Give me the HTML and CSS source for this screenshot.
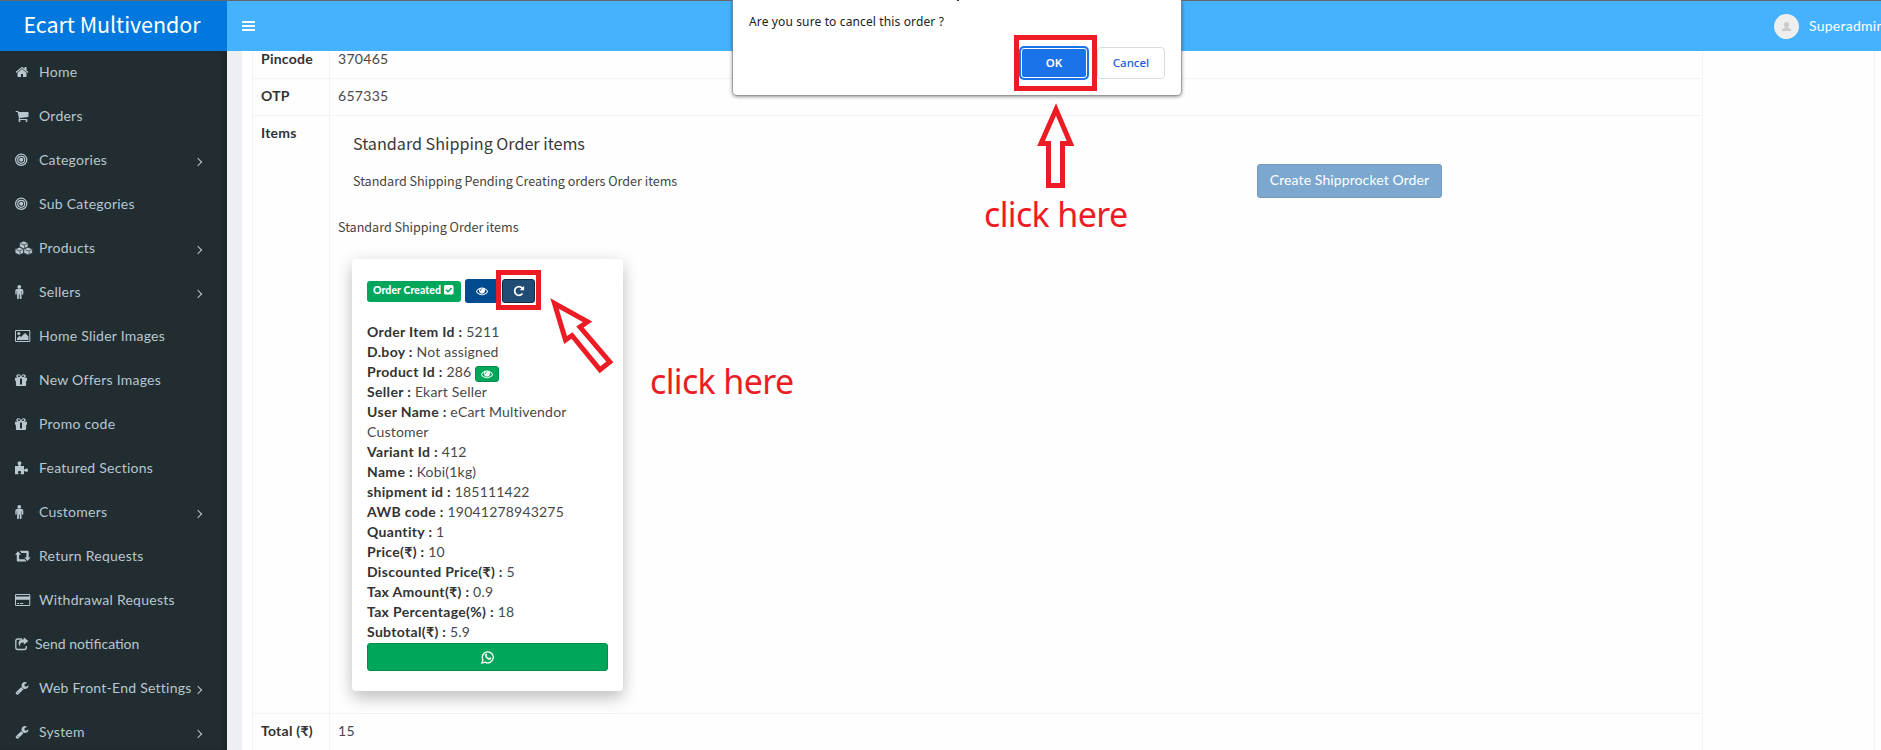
FILE: index.html
```html
<!DOCTYPE html>
<html lang="en">
<head>
<meta charset="utf-8">
<title>Ecart Multivendor</title>
<link rel="stylesheet" href="styles.css">
</head>
<body>
<svg width="0" height="0" class="defs">
  <symbol id="home" viewBox="0 0 1792 1792"><path d="M1472 992v480q0 26-19 45t-45 19h-384v-384h-256v384h-384q-26 0-45-19t-19-45v-480q0-1 .5-3t.5-3l575-474 575 474q1 2 1 6zm223-69l-62 74q-8 9-21 11h-3q-13 0-21-7l-692-577-692 577q-12 8-24 7-13-2-21-11l-62-74q-8-10-7-23.5t11-21.5l719-599q32-26 76-26t76 26l244 204v-195q0-14 9-23t23-9h192q14 0 23 9t9 23v408l219 182q10 8 11 21.5t-7 23.5z"/></symbol>
  <symbol id="cart" viewBox="0 0 1792 1792"><path d="M704 1536q0 52-38 90t-90 38-90-38-38-90 38-90 90-38 90 38 38 90zm896 0q0 52-38 90t-90 38-90-38-38-90 38-90 90-38 90 38 38 90zm128-1088v512q0 24-16.5 42.5t-40.5 21.5l-1044 122q13 60 13 70 0 16-24 64h920q26 0 45 19t19 45-19 45-45 19h-1024q-26 0-45-19t-19-45q0-11 8-31.5t16-36 21.5-40 15.5-29.5l-177-823h-204q-26 0-45-19t-19-45 19-45 45-19h256q16 0 28.5 6.5t19.5 15.5 13 24.5 8 26 5.5 29.5 4.5 26h1201q26 0 45 19t19 45z"/></symbol>
  <symbol id="bull" viewBox="0 0 14 14"><g fill="none" stroke="currentColor"><circle cx="6.200" cy="6.800" r="5.600" stroke-width="1.200"/><circle cx="6.200" cy="6.800" r="3.500" stroke-width="1.200"/></g><circle cx="6.200" cy="6.800" r="2"/></symbol>
  <symbol id="cubes" viewBox="0 0 18 14"><g stroke="#222d32" stroke-width=".7" stroke-linejoin="round"><path d="M8.800 0l4.200 1.900v4L8.800 7.900 4.600 5.900v-4z"/><path d="M4.400 6.200l4.300 1.900v4L4.400 14 .1 12.100v-4z"/><path d="M13.100 6.200l4.300 1.900v4L13.100 14l-4.300-1.900v-4z"/><path d="M5.800 2.700L9 4l3.200-1.300M9 4M9.600 4.500v2.600M1.300 8.700l3.200 1.300 3.200-1.300M5.100 10.500v2.600M10.300 8.700l3.200 1.300 3.200-1.300M14.100 10.500v2.600" fill="none"/></g></symbol>
  <symbol id="male" viewBox="0 0 9 14"><circle cx="4.300" cy="1.900" r="1.900"/><path d="M2 4h4.600Q8.300 4 8.300 5.700V9q0 .8-.7.800T6.900 9V6.300h-.4v7q0 .8-.9.800t-.9-.8v-3.800h-.8v3.800q0 .8-.9.800t-.9-.8v-7h-.4V9q0 .8-.7.800T.3 9V5.700Q.3 4 2 4z"/></symbol>
  <symbol id="image" viewBox="0 0 16 14"><path fill-rule="evenodd" d="M1.200 1h12.900q1.200 0 1.200 1.200v9.600q0 1.200-1.200 1.200H1.200Q0 13 0 11.800V2.200Q0 1 1.200 1zM1 2v10h13.300V2z"/><circle cx="3.800" cy="4.600" r="1.500"/><path d="M2 11V9.300l2.500-2.500L6 8.100l4-4 3.400 3.200V11z"/></symbol>
  <symbol id="gift" viewBox="0 0 13 14"><path fill-rule="evenodd" d="M0 4.700h3.400C1.200 4.600 1 3 1.500 2.200 2.600.8 4.500.9 5.400 2.300L6 3.300l.6-1C7.500.9 9.400.8 10.500 2.200c.5.800.3 2.400-1.900 2.500H12v3h-.9V12q0 .9-.9.900H1.800q-.9 0-.9-.9V7.700H0zM3.400 3.900h1.900L4.500 2.700C3.700 1.700 2 3.200 3.400 3.900zm5.200 0C10 3.200 8.300 1.700 7.500 2.700l-.8 1.200zM5 5.500v6h2v-6z"/></symbol>
  <symbol id="puzzle" viewBox="0 0 14 14"><path d="M0 5h3.700C3 3.800 2.600 3 2.600 2.100 2.600.9 3.500.5 4.500.5S6.400.9 6.400 2.100C6.400 3 6 3.800 5.300 5H9v3.200c.7.700 1.300-.6 2.500-.6 1 0 1.500.7 1.500 1.600s-.5 1.600-1.500 1.600c-1.200 0-1.800-1.300-2.500-.6V13.300H5.700c-.6-.6.4-1.100.4-2.200 0-.8-.6-1.200-1.500-1.200s-1.600.4-1.600 1.200c0 1.100 1 1.600.4 2.200H0z"/></symbol>
  <symbol id="retweet" viewBox="0 0 16 14"><path d="M3 2.300l3 3.500H4.100v4.500h5.700l1.700 2.200H2.600q-.8 0-.8-.8V5.800H0zM4.800 1.700h7.900q1 0 1 1v5.700H15.600l-3.100 3.700-3.100-3.700h2V4H6.500z"/></symbol>
  <symbol id="card" viewBox="0 0 16 14"><path fill-rule="evenodd" d="M1.300 1h12.700q1.300 0 1.300 1.300v9.400q0 1.300-1.300 1.300H1.300Q0 13 0 11.700V2.300Q0 1 1.300 1zM1 2v1.500h13.300V2zM1 6.800V12h13.300V6.800z"/><path d="M2 10h2v1H2zM5 10h3.200v1H5z"/></symbol>
  <symbol id="share" viewBox="0 0 14 14"><path d="M7 2H3Q.8 2 .8 4v6.500q0 2 2 2h6.500q2 0 2-2V9" fill="none" stroke="currentColor" stroke-width="1.300"/><path d="M8.800.2l4.500 3.700-4.500 3.800V5.600C5.500 5.500 4.600 7 5.300 9.800 2.200 6.500 3.200 2.400 8.800 2.300z"/></symbol>
  <symbol id="wrench" viewBox="0 0 1792 1792"><path d="M448 1472q0-26-19-45t-45-19-45 19-19 45 19 45 45 19 45-19 19-45zm644-420l-682 682q-37 37-90 37-52 0-91-37l-106-108q-38-36-38-90 0-53 38-91l681-681q39 98 114.500 173.500t173.500 114.500zm634-435q0 39-23 106-47 134-164.500 217.500t-258.500 83.500q-185 0-316.500-131.500t-131.500-316.500 131.500-316.500 316.500-131.500q58 0 121.500 16.500t107.500 46.500q16 11 16 28t-16 28l-293 169v224l193 107q5-3 79-48.500t135.500-81 70.500-35.500q15 0 23.500 10t8.500 25z"/></symbol>
  <symbol id="eye" viewBox="0 0 1792 1792"><path d="M1664 960q-152-236-381-353 61 104 61 225 0 185-131.500 316.500t-316.500 131.500-316.500-131.500-131.500-316.500q0-121 61-225-229 117-381 353 133 205 333.500 326.500t434.500 121.500 434.500-121.500 333.500-326.500zm-720-384q0-20-14-34t-34-14q-125 0-214.500 89.500t-89.500 214.500q0 20 14 34t34 14 34-14 14-34q0-86 61-147t147-61q20 0 34-14t14-34zm848 384q0 34-20 69-140 230-376.500 368.500t-499.500 138.500-499.500-139-376.500-368q-20-35-20-69t20-69q140-229 376.500-368t499.500-139 499.500 139 376.500 368q20 35 20 69z"/></symbol>
  <symbol id="repeat" viewBox="0 0 1792 1792"><path d="M1664 256v448q0 26-19 45t-45 19h-448q-42 0-59-40-17-39 14-69l138-138q-148-137-349-137-104 0-198.500 40.500t-163.500 109.500-109.500 163.500-40.500 198.500 40.500 198.500 109.500 163.500 163.500 109.500 198.500 40.500q119 0 225-52t179-147q7-10 23-12 15 0 25 9l137 138q9 8 9.500 20.500t-7.500 22.500q-109 132-264 204.500t-327 72.500q-156 0-298-61t-245-164-164-245-61-298 61-298 164-245 245-164 298-61q147 0 284.500 55.500t244.500 156.500l130-129q29-31 70-14 39 17 39 59z"/></symbol>
  <symbol id="check" viewBox="0 0 10 10"><rect width="9.500" height="9.500" rx="1.600"/><path d="M2 4.800l2 2 3.600-3.700" fill="none" stroke="#00a65a" stroke-width="1.500"/></symbol>
  <symbol id="whatsapp" viewBox="0 0 14 14"><path d="M1 13l.9-3.100A5.500 5.500 0 1 1 4 12.100z" fill="none" stroke="currentColor" stroke-width="1.300"/><path d="M4.600 3.700c.6-.4 1-.3 1.200.2l.4 1c.1.400-.5.800-.5 1.100.5.900 1.200 1.500 2.200 2 .4 0 .7-.9 1.100-.8l1.100.6c.6.300.2 1.200-.3 1.600-1 .7-2.500.1-3.600-.7C5 7.900 4.100 6.700 3.900 5.600c0-.8.2-1.500.7-1.900z"/></symbol>
</svg>

<div class="page">
  <header class="top">
    <div class="logo"><span class="t-logo">Ecart Multivendor</span></div>
    <nav class="navbar">
      <div class="burger"><i></i><i></i><i></i></div>
      <div class="user">
        <svg class="avatar" viewBox="0 0 25 25"><circle cx="12.500" cy="12.500" r="12.500" fill="#eee"/><path d="M12.500 8c1.600 0 2.600 1 2.500 2.700-.1 1.400-1 1.700-1 2.600 0 1.200 3.200 1 3.200 3.600H7.800c0-2.600 3.200-2.400 3.200-3.600 0-.9-.9-1.200-1-2.600C9.900 9 10.900 8 12.500 8z" fill="#c9c9c9"/></svg>
        <span class="t-user">Superadmin</span>
      </div>
    </nav>
  </header>
  <div class="body">
    <ul class="side">
      <li><svg class="w14"><use href="#home"/></svg><span>Home</span></li>
      <li><svg class="w14"><use href="#cart"/></svg><span>Orders</span></li>
      <li><svg class="w14"><use href="#bull"/></svg><span>Categories</span><b class="caret"></b></li>
      <li><svg class="w14"><use href="#bull"/></svg><span>Sub Categories</span></li>
      <li><svg class="w18"><use href="#cubes"/></svg><span>Products</span><b class="caret"></b></li>
      <li><svg class="w9"><use href="#male"/></svg><span>Sellers</span><b class="caret"></b></li>
      <li><svg class="w16"><use href="#image"/></svg><span>Home Slider Images</span></li>
      <li><svg class="w13"><use href="#gift"/></svg><span>New Offers Images</span></li>
      <li><svg class="w13"><use href="#gift"/></svg><span>Promo code</span></li>
      <li><svg class="w14"><use href="#puzzle"/></svg><span>Featured Sections</span></li>
      <li><svg class="w9"><use href="#male"/></svg><span>Customers</span><b class="caret"></b></li>
      <li><svg class="w16"><use href="#retweet"/></svg><span>Return Requests</span></li>
      <li><svg class="w16"><use href="#card"/></svg><span>Withdrawal Requests</span></li>
      <li class="tight"><svg class="w14"><use href="#share"/></svg><span>Send notification</span></li>
      <li><svg class="w14"><use href="#wrench"/></svg><span>Web Front-End Settings</span><b class="caret"></b></li>
      <li><svg class="w14"><use href="#wrench"/></svg><span>System</span><b class="caret"></b></li>
    </ul>
    <main class="content">
      <div class="box">
        <div class="table">
          <div class="row pin"><div class="th">Pincode</div><div class="td">370465</div></div>
          <div class="row"><div class="th">OTP</div><div class="td">657335</div></div>
          <div class="row items"><div class="th">Items</div>
            <div class="td">
              <h4 class="t-h4">Standard Shipping Order items</h4>
              <div class="pending"><span class="t-src t-pend">Standard Shipping Pending Creating orders Order items</span><button class="create">Create Shipprocket Order</button></div>
              <div class="t-src t-std">Standard Shipping Order items</div>
              <div class="card">
                <div class="actions">
                  <span class="badge"><span>Order Created</span><svg><use href="#check"/></svg></span>
                  <span class="btn-eye"><svg><use href="#eye"/></svg></span>
                  <span class="btn-redo"><svg><use href="#repeat"/></svg></span>
                </div>
                <p><b>Order Item Id : </b>5211</p>
                <p><b>D.boy : </b>Not assigned</p>
                <p><b>Product Id : </b>286 <span class="mini"><svg><use href="#eye"/></svg></span></p>
                <p><b>Seller : </b>Ekart Seller</p>
                <p><b>User Name : </b>eCart Multivendor<br>Customer</p>
                <p><b>Variant Id : </b>412</p>
                <p><b>Name : </b>Kobi(1kg)</p>
                <p><b>shipment id : </b>185111422</p>
                <p><b>AWB code : </b>19041278943275</p>
                <p><b>Quantity : </b>1</p>
                <p><b>Price(₹) : </b>10</p>
                <p><b>Discounted Price(₹) : </b>5</p>
                <p><b>Tax Amount(₹) : </b>0.9</p>
                <p><b>Tax Percentage(%) : </b>18</p>
                <p><b>Subtotal(₹) : </b>5.9</p>
                <div class="wa"><svg><use href="#whatsapp"/></svg></div>
              </div>
            </div>
          </div>
          <div class="row"><div class="th">Total (₹)</div><div class="td">15</div></div>
        </div>
      </div>
    </main>
  </div>

  <div class="dialog">
    <i class="descender"></i>
    <p class="t-dlg">Are you sure to cancel this order ?</p>
    <div class="dlg-btns"><span class="ok">OK</span><span class="cancel">Cancel</span></div>
  </div>
  <div class="mark mark-ok"></div>
  <div class="mark mark-redo"></div>
  <svg class="arrows" viewBox="0 0 1881 750"><g fill="#fff" stroke="#ed1c24" stroke-width="5" stroke-miterlimit="10">
    <path d="M1056 109.500L1041 143.500H1048.500V185.500H1062.500V143.500H1070.500Z"/>
    <path d="M554.500 303.500L587.500 321.700 580 327 609.800 362 600 369.800 572 335.500 565.500 340Z"/>
  </g></svg>
  <div class="note note-ok">click here</div>
  <div class="note note-redo">click here</div>
</div>
</body>
</html>
```
FILE: styles.css
```css
* { box-sizing: border-box; }
body { margin: 0; font: 14px/20px Lato, "Noto Sans", sans-serif; color: #333; }
.defs { position: absolute; }
svg { fill: currentColor; display: block; }
p, h4, ul { margin: 0; padding: 0; font-weight: 400; }
.page { position: relative; width: 1881px; height: 750px; overflow: hidden; display: flex; flex-direction: column; }

.top { display: flex; height: 51px; flex: none; border-top: 1px solid #66686b; color: #fff; }
.logo { width: 227px; background: #0078de; display: flex; justify-content: center; padding: 9px 3px 0 0; }
.t-logo { font: 21.5px/28px "Noto Sans CJK SC", sans-serif; white-space: nowrap; letter-spacing: -.05px; }
.navbar { flex: 1; background: #44b2ff; display: flex; justify-content: space-between; padding-left: 15px; }
.burger { display: flex; flex-direction: column; gap: 2px; padding-top: 20px; }
.burger i { width: 13px; height: 2px; background: #fff; }
.user { display: flex; gap: 10px; width: 107px; padding-top: 13px; }
.avatar { width: 25px; height: 25px; flex: none; }
.t-user { line-height: 23px; letter-spacing: .25px; }

.body { display: flex; flex: 1; min-height: 0; }
.side { width: 227px; background: #222d32; box-shadow: inset -4px 0 4px -1px #1a2428; color: #b8c7ce; list-style: none; padding-left: 15px; }
.side li { display: grid; grid-template-columns: 24px 1fr 14px; align-items: center; height: 44px; padding-right: 15px; padding-bottom: 2px; letter-spacing: .25px; white-space: nowrap; }
.side li.tight { grid-template-columns: 20px 1fr; letter-spacing: 0; }
.side svg { height: 14px; width: 14px; }
.side .w18 { width: 18px; }
.side .w16 { width: 16px; }
.side .w13 { width: 13px; }
.side .w9 { width: 9px; }
.caret { width: 6px; height: 6px; border: solid #b8c7ce; border-width: 1.5px 1.5px 0 0; transform: rotate(45deg); margin: 3px 0 0 -3px; }

.content { flex: 1; background: #ecf0f5; padding-left: 15px; }
.box { background: #fefefe; width: 1633px; height: 100%; padding-left: 10px; border-right: 1px solid #f2f2f2; outline: 6px solid #fefefe; clip-path: inset(0 -6px 0 0); }
.table { width: 1451px; border: solid #f3f3f3; border-width: 0 1px; }
.row { display: grid; grid-template-columns: 77px 1fr; border-bottom: 1px solid #f3f3f3; height: 37px; }
.row.pin { height: 28px; }
.row.pin > div { padding-top: 0; line-height: 18px; margin-top: -1px; }
.row.items { height: 598px; }
.th { font-weight: 700; padding: 7px 8px; border-right: 1px solid #f3f3f3; letter-spacing: .25px; white-space: nowrap; }
.td { padding: 7px 8px; letter-spacing: .3px; color: #484848; }

.t-h4 { font: 300 16.2px/20px "Noto Sans CJK SC", sans-serif; font-weight: 400; padding: 10px 0 0 15px; letter-spacing: -.03px; color: #3a3a3a; }
.t-src { font: 12.6px/20px "Noto Sans CJK SC", sans-serif; letter-spacing: -.02px; color: #444; }
.pending { display: flex; padding: 11px 0 0 15px; height: 45px; }
.t-pend { width: 904px; padding-top: 7px; }
.create { width: 185px; height: 34px; flex: none; background: #7ca8d0; border: 1px solid #7499bd; border-radius: 3px; color: #fff; font: 14px/20px Lato, sans-serif; padding: 0 0 2px; letter-spacing: .1px; }
.t-std { padding-top: 19px; }
.card { width: 271px; height: 432px; margin: 22px 0 0 14px; padding: 20px 15px; border-radius: 4px; background: #fff; box-shadow: 0 8px 16px rgba(0,0,0,.2), 0 0 18px rgba(0,0,0,.07); }
.actions { display: flex; gap: 4px; height: 43px; }
.badge { display: flex; gap: 3px; width: 94px; height: 21px; margin-top: 2px; padding-left: 6px; border-radius: 3px; background: #00a65a; color: #fff; font: 900 10.5px/19px Lato, sans-serif; white-space: nowrap; letter-spacing: .05px; }
.badge svg { width: 10px; height: 10px; margin-top: 4px; flex: none; }
.btn-eye, .btn-redo { display: flex; align-items: center; justify-content: center; width: 34px; height: 24px; background: #004a8f; border-radius: 3px; color: #fff; }
.btn-redo { width: 33px; background: #204d74; border: 1px solid #122b40; margin-left: -1px; }
.btn-eye svg, .btn-redo svg, .mini svg { width: 12px; height: 12px; }
.card b { font-weight: 700; color: #333; letter-spacing: .33px; }
.card p { height: 20px; white-space: nowrap; letter-spacing: .2px; }
.card p:has(br) { height: 40px; }
.mini { display: inline-flex; width: 24px; height: 16px; align-items: center; justify-content: center; background: #00a65a; border: 1px solid #008d4c; border-radius: 3px; color: #fff; vertical-align: -3px; }
.wa { height: 28px; margin-top: 1px; display: flex; align-items: center; justify-content: center; background: #00a65a; border: 1px solid #008d4c; border-radius: 3px; color: #fff; }
.wa svg { width: 14px; height: 14px; }

.dialog { position: absolute; left: 733px; top: 0; width: 448px; height: 95px; background: #fff; border-radius: 0 0 4px 4px; box-shadow: 0 0 0 .6px #8a8a8a, 0 1px 4px rgba(0,0,0,.6); padding: 12px 16px 0 16px; font-family: "Noto Sans", sans-serif; }
.descender { position: absolute; left: 224px; top: 0; width: 2px; height: 1px; background: #333; }
.t-dlg { font-size: 12px; line-height: 20px; letter-spacing: .13px; color: #202124; }
.dlg-btns { display: flex; justify-content: flex-end; gap: 10px; padding-top: 15px; font-size: 11.5px; font-weight: 600; text-align: center; }
.ok { width: 66px; height: 30px; margin-top: 1px; line-height: 28px; background: #1a73e8; border: 1px solid #fff; border-radius: 3px; box-shadow: 0 0 0 2px #1a73e8; color: #fff; }
.cancel { width: 68px; height: 32px; line-height: 30px; border: 1px solid #dadce0; border-radius: 4px; color: #1a60e0; font-weight: 500; }
.mark { position: absolute; border: 5px solid #ed1c24; }
.mark-ok { left: 1014px; top: 35px; width: 83px; height: 56px; }
.mark-redo { left: 496px; top: 270px; width: 45px; height: 40px; }
.arrows { position: absolute; left: 0; top: 0; width: 1881px; height: 750px; }
.note { position: absolute; color: #ed1c24; font: 34px/40px "Noto Sans", sans-serif; letter-spacing: -.65px; white-space: nowrap; }
.note-ok { left: 984px; top: 194px; }
.note-redo { left: 650px; top: 361px; }
```
